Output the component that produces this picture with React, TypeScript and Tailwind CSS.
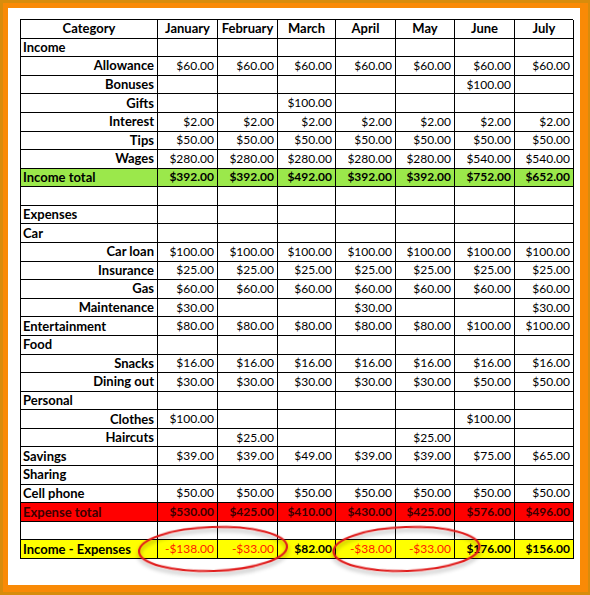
import React from "react";

type Row = {
  label: string;
  kind: "head" | "group" | "item" | "blank" | "income" | "expense" | "net";
  values?: (number | null)[];
};

const months = ["January", "February", "March", "April", "May", "June", "July"];

const all = (n: number) => Array(7).fill(n) as number[];
const only = (idx: number[], n: number) =>
  Array.from({ length: 7 }, (_, i) => (idx.includes(i) ? n : null));

const rows: Row[] = [
  { label: "Income", kind: "group" },
  { label: "Allowance", kind: "item", values: all(60) },
  { label: "Bonuses", kind: "item", values: only([5], 100) },
  { label: "Gifts", kind: "item", values: only([2], 100) },
  { label: "Interest", kind: "item", values: all(2) },
  { label: "Tips", kind: "item", values: all(50) },
  { label: "Wages", kind: "item", values: [280, 280, 280, 280, 280, 540, 540] },
  { label: "Income total", kind: "income", values: [392, 392, 492, 392, 392, 752, 652] },
  { label: "", kind: "blank" },
  { label: "Expenses", kind: "group" },
  { label: "Car", kind: "group" },
  { label: "Car loan", kind: "item", values: all(100) },
  { label: "Insurance", kind: "item", values: all(25) },
  { label: "Gas", kind: "item", values: all(60) },
  { label: "Maintenance", kind: "item", values: only([0, 3, 6], 30) },
  { label: "Entertainment", kind: "group", values: [80, 80, 80, 80, 80, 100, 100] },
  { label: "Food", kind: "group" },
  { label: "Snacks", kind: "item", values: all(16) },
  { label: "Dining out", kind: "item", values: [30, 30, 30, 30, 30, 50, 50] },
  { label: "Personal", kind: "group" },
  { label: "Clothes", kind: "item", values: only([0, 5], 100) },
  { label: "Haircuts", kind: "item", values: only([1, 4], 25) },
  { label: "Savings", kind: "group", values: [39, 39, 49, 39, 39, 75, 65] },
  { label: "Sharing", kind: "group" },
  { label: "Cell phone", kind: "group", values: all(50) },
  { label: "Expense total", kind: "expense", values: [530, 425, 410, 430, 425, 576, 496] },
  { label: "", kind: "blank" },
  { label: "Income - Expenses", kind: "net", values: [-138, -33, 82, -38, -33, 176, 156] },
];

const money = (n: number) => (n < 0 ? `-$${Math.abs(n).toFixed(2)}` : `$${n.toFixed(2)}`);

const rowBg: Record<Row["kind"], string> = {
  head: "",
  group: "",
  item: "",
  blank: "",
  income: "bg-[#9be84b]",
  expense: "bg-[#ff0000]",
  net: "bg-[#ffff00]",
};

function Cell({ className, children }: { className?: string; children?: React.ReactNode }) {
  return (
    <div className={"flex items-center border-r border-b border-black overflow-hidden whitespace-nowrap " + (className ?? "")}>
      {children}
    </div>
  );
}

export default function App() {
  return (
    <div
      className="w-[590px] h-[595px] bg-[#d88c0c] pl-[3px] pt-[3px] pr-[2px] pb-[3px]"
      style={{ fontFamily: "Lato, 'Open Sans', sans-serif" }}
    >
      <div className="w-full h-full bg-[#f98a06] pl-[5px] pt-[5px] pr-[8px] pb-[7px]">
        <div className="relative w-full h-full bg-white pl-[12px] pt-[11px]">
          <div className="grid grid-cols-[137px_60px_60px_58px_60px_59px_60px_59px] grid-rows-[repeat(29,minmax(0,1fr))] w-[553px] h-[540px] border-l border-t border-black text-[12px] leading-none text-black">
            {/* header */}
            <Cell className="justify-center font-bold text-[13px]">Category</Cell>
            {months.map((m) => (
              <Cell key={m} className="justify-center font-bold text-[13px]">
                {m}
              </Cell>
            ))}

            {rows.map((r, ri) => {
              const bg = rowBg[r.kind];
              const labelAlign = r.kind === "item" ? "justify-end pr-[3px]" : "justify-start pl-[2px]";
              const labelColor = r.kind === "expense" ? "text-[#3a0000]" : "";
              return (
                <React.Fragment key={ri}>
                  <Cell className={`${labelAlign} ${bg} ${labelColor} font-bold text-[13px]`}>{r.label}</Cell>
                  {Array.from({ length: 7 }).map((_, ci) => {
                    const v = r.values ? r.values[ci] : null;
                    let tone = "";
                    if (r.kind === "income") tone = "font-bold";
                    if (r.kind === "expense") tone = "font-bold text-[#3a0000]";
                    if (r.kind === "net") tone = v !== null && v < 0 ? "text-[#ff1a00]" : "font-bold";
                    return (
                      <Cell key={ci} className={`justify-end pr-[3px] ${bg} ${tone}`}>
                        {v !== null ? money(v) : ""}
                      </Cell>
                    );
                  })}
                </React.Fragment>
              );
            })}
          </div>

          {/* red highlight rings over the last row */}
          <svg className="absolute left-0 top-0 pointer-events-none" width="572" height="577" viewBox="0 0 572 577">
            <defs>
              <filter id="ringShadow" x="-20%" y="-40%" width="140%" height="200%">
                <feDropShadow dx="0" dy="3" stdDeviation="2" floodColor="#000" floodOpacity="0.35" />
              </filter>
            </defs>
            <ellipse
              cx="205"
              cy="541"
              rx="74"
              ry="22"
              fill="none"
              stroke="#e01b1b"
              strokeWidth="2.2"
              filter="url(#ringShadow)"
              transform="rotate(-2 205 541)"
            />
            <ellipse
              cx="398.5"
              cy="541"
              rx="73"
              ry="22"
              fill="none"
              stroke="#e01b1b"
              strokeWidth="2.2"
              filter="url(#ringShadow)"
              transform="rotate(-2 398.5 541)"
            />
          </svg>
        </div>
      </div>
    </div>
  );
}
